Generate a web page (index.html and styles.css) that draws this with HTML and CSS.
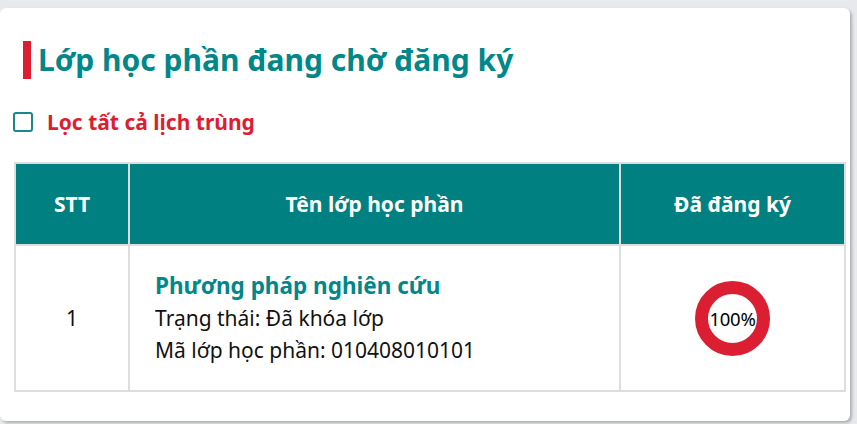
FILE: index.html
```html
<!DOCTYPE html>
<html lang="vi">
<head>
<meta charset="utf-8">
<link rel="stylesheet" href="styles.css">
</head>
<body>
<div class="card">
  <h2 class="title">Lớp học phần đang chờ đăng ký</h2>
  <label class="filter">
    <span class="box"></span>
    <span class="filter-text">Lọc tất cả lịch trùng</span>
  </label>
  <table class="grid">
    <colgroup>
      <col class="c-stt">
      <col class="c-name">
      <col class="c-reg">
    </colgroup>
    <thead>
      <tr>
        <th>STT</th>
        <th>Tên lớp học phần</th>
        <th>Đã đăng ký</th>
      </tr>
    </thead>
    <tbody>
      <tr>
        <td class="stt">1</td>
        <td class="info">
          <div class="course">Phương pháp nghiên cứu</div>
          <div>Trạng thái: Đã khóa lớp</div>
          <div>Mã lớp học phần: 010408010101</div>
        </td>
        <td class="reg">
          <div class="ring">100%</div>
        </td>
      </tr>
    </tbody>
  </table>
</div>
</body>
</html>
```
FILE: styles.css
```css
html, body {
  margin: 0;
  padding: 0;
}
body {
  background: #e7e9ec;
  font-family: "Noto Sans", "Open Sans", sans-serif;
  color: #111;
  height: 424px;
  overflow: hidden;
}
.card {
  margin-top: 8px;
  width: 850px;
  height: 413px;
  box-sizing: border-box;
  background: #fff;
  border-radius: 6px;
  box-shadow: 2px 2px 3px rgba(0,0,0,0.25);
  padding: 33px 0 0 14px;
}
.title {
  margin: 0 0 0 9px;
  border-left: 8px solid #dc1e32;
  padding-left: 7px;
  height: 38px;
  line-height: 38px;
  font-size: 30px;
  font-weight: 700;
  color: #00878a;
}
.filter {
  display: flex;
  align-items: center;
  gap: 14px;
  margin-top: 30px;
  margin-left: -1px;
}
.box {
  width: 20px;
  height: 20px;
  box-sizing: border-box;
  border: 2px solid #17898c;
  border-radius: 3px;
}
.filter-text {
  font-size: 21px;
  font-weight: 700;
  color: #dc1e32;
  line-height: 26px;
}
.grid {
  margin-top: 27px;
  width: 830px;
  border-collapse: collapse;
  table-layout: fixed;
  border: 2px solid #dddddd;
}
.c-stt { width: 114px; }
.c-name { width: 491px; }
.c-reg { width: 225px; }
.grid th, .grid td {
  border: 2px solid #dddddd;
  text-align: center;
}
.grid th {
  background: #008080;
  color: #fff;
  font-size: 21px;
  font-weight: 700;
  height: 80px;
  padding: 0;
}
.grid td {
  font-size: 21px;
  height: 144px;
  padding: 0;
}
.info {
  text-align: left !important;
  padding-left: 25px !important;
  line-height: 32px;
}
.course {
  font-size: 22.5px;
  font-weight: 700;
  color: #00878a;
}
.ring {
  width: 75px;
  height: 75px;
  box-sizing: border-box;
  border: 13px solid #dc1e32;
  border-radius: 50%;
  margin: 0 auto;
  display: flex;
  align-items: center;
  justify-content: center;
  font-size: 18.5px;
  color: #000;
  letter-spacing: -0.3px;
}
```
